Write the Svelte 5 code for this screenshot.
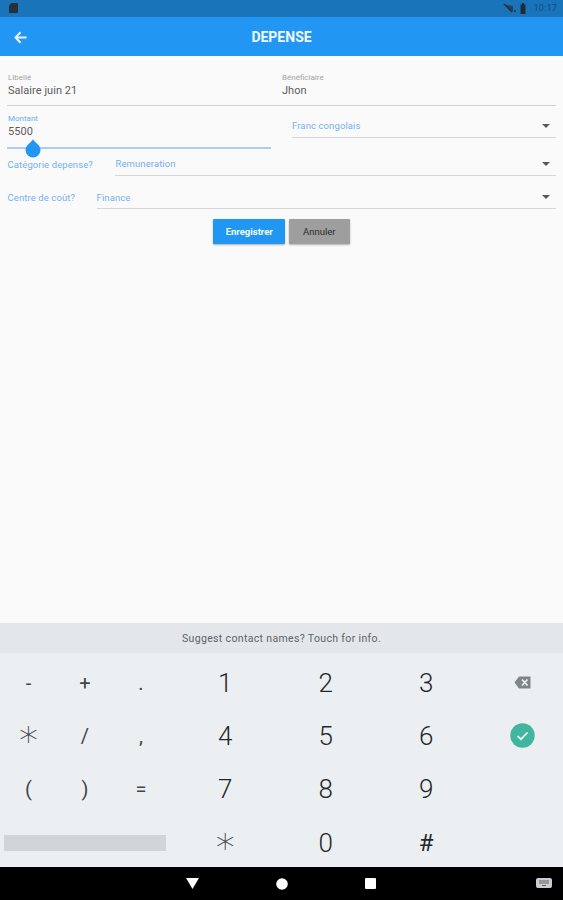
<script>
  const keys = [
    { k: '-', c: 'sym' }, { k: '+', c: 'sym' }, { k: '.', c: 'sym' }, { k: '1', c: 'num first' }, { k: '2', c: 'num' }, { k: '3', c: 'num' }, { k: 'back', c: 'icon' },
    { k: '*', c: 'sym star' }, { k: '/', c: 'sym' }, { k: ',', c: 'sym' }, { k: '4', c: 'num first' }, { k: '5', c: 'num' }, { k: '6', c: 'num' }, { k: 'ok', c: 'icon' },
    { k: '(', c: 'sym' }, { k: ')', c: 'sym' }, { k: '=', c: 'sym' }, { k: '7', c: 'num first' }, { k: '8', c: 'num' }, { k: '9', c: 'num' }, { k: '', c: 'icon' },
  ];
</script>

<div class="screen">
  <div class="status">
    <svg class="sim" width="9" height="10" viewBox="0 0 9 10"><path d="M2.5 0H9V10H0V2.5Z" fill="#26303a"/></svg>
    <div class="status-right">
      <svg width="15" height="10" viewBox="0 0 15 10"><path d="M0 1 10 9V3Z" fill="#26405a"/><path d="M1 1 9 9" stroke="#26303a" stroke-width="1.5"/><rect x="11" y="7" width="2" height="2" fill="#26405a"/></svg>
      <svg class="batt" width="6" height="11" viewBox="0 0 6 11"><path d="M1 1.5H2V0H4V1.5H5.500V11H.5V1.5Z" fill="#1e2a3a"/></svg>
      <span>10:17</span>
    </div>
  </div>
  <header class="appbar">
    <svg class="back" width="13" height="13" viewBox="0 0 13 13"><path d="M12.500 6.500H2M6.500 1.200 1.500 6.500 6.500 11.800" fill="none" stroke="#eaf5ff" stroke-width="2"/></svg>
    <h1>DEPENSE</h1>
  </header>

  <main class="form">
    <div class="row two">
      <div class="field">
        <span class="lab">Libellé</span>
        <span class="val">Salaire juin 21</span>
      </div>
      <div class="field">
        <span class="lab">Bénéficiaire</span>
        <span class="val">Jhon</span>
      </div>
    </div>
    <div class="row-line"></div>

    <div class="row amount">
      <div class="montant">
        <span class="lab blue">Montant</span>
        <span class="val">5500</span>
        <div class="slider"><svg class="thumb" width="16" height="19" viewBox="0 0 16 19"><path d="M8 0C9 3 15.500 6 15.500 11A7.500 7.500 0 0 1 .5 11C.5 6 7 3 8 0Z" fill="#2196f3"/></svg></div>
      </div>
      <div class="select franc">
        <span>Franc congolais</span><i class="caret"></i>
      </div>
    </div>

    <div class="row labeled cat">
      <span class="q">Catégorie depense?</span>
      <div class="select"><span>Remuneration</span><i class="caret"></i></div>
    </div>
    <div class="row labeled centre">
      <span class="q">Centre de coût?</span>
      <div class="select"><span>Finance</span><i class="caret"></i></div>
    </div>

    <div class="actions">
      <button class="save">Enregistrer</button>
      <button class="cancel">Annuler</button>
    </div>
  </main>

  <section class="keyboard">
    <div class="suggest">Suggest contact names? Touch for info.</div>
    <div class="keys">
      {#each keys as key}
        <div class="key {key.c}">
          {#if key.k === 'back'}
            <svg width="17" height="13" viewBox="0 0 17 13"><path d="M5 .5H16.500V12.500H5L.5 6.500Z" fill="#7d8589"/><path d="M8 3.500 13.500 9.500M13.500 3.500 8 9.500" stroke="#eceff1" stroke-width="1.800"/></svg>
          {:else if key.k === 'ok'}
            <svg width="25" height="25" viewBox="0 0 25 25"><circle cx="12.500" cy="12.500" r="12.200" fill="#40b5a0"/><path d="M7.500 13 11 16.200 17.500 9.500" fill="none" stroke="#e8f6f3" stroke-width="1.700"/></svg>
          {:else if key.c.includes('star')}
            <span class="asterisk">*</span>
          {:else}
            {key.k}
          {/if}
        </div>
      {/each}
      <div class="key space-cell"><div class="space"></div></div>
      <div class="key num first"><span class="asterisk">*</span></div>
      <div class="key num">0</div>
      <div class="key num hash">#</div>
      <div class="key"></div>
    </div>
  </section>

  <nav class="navbar">
    <svg width="13" height="11" viewBox="0 0 13 11"><path d="M0 0H13L6.500 11Z" fill="#fff"/></svg>
    <svg width="12" height="12" viewBox="0 0 12 12"><circle cx="6" cy="6" r="5.800" fill="#fff"/></svg>
    <svg width="11" height="11" viewBox="0 0 11 11"><rect width="11" height="11" rx="1" fill="#fff"/></svg>
    <svg class="kb" width="16" height="12" viewBox="0 0 16 12"><rect width="16" height="10" y="1" rx="2" fill="#c9cdcf"/><path d="M3 4H13M3 6H13M6 8.500H10" stroke="#5c6062"/></svg>
  </nav>
</div>

<style>
  :global(body) {
    margin: 0;
    background: #fafafa;
    font-family: Roboto, "Liberation Sans", sans-serif;
  }
  .screen {
    width: 563px;
    height: 900px;
    display: flex;
    flex-direction: column;
    overflow: hidden;
    background: #fafafa;
  }
  .status {
    height: 17px;
    flex: none;
    background: #1a74ba;
    display: flex;
    align-items: center;
    justify-content: space-between;
    padding: 0 6px 1px 9px;
    box-sizing: border-box;
  }
  .status-right {
    display: flex;
    align-items: center;
    gap: 5px;
    font-size: 9px;
    color: #0f4e86;
    letter-spacing: 0.2px;
  }
  .batt {
    margin: 0 3px 0 -3px;
  }
  .appbar {
    height: 39px;
    flex: none;
    background: #2196f3;
    display: flex;
    align-items: center;
    justify-content: center;
    position: relative;
  }
  .back {
    position: absolute;
    left: 14px;
    top: 13.500px;
  }
  h1 {
    margin: 0;
    color: #eef8ff;
    font-size: 14px;
    font-weight: 700;
  }
  .form {
    flex: 1;
    padding: 16.500px 7px 0;
    display: flex;
    flex-direction: column;
    min-height: 0;
  }
  .row.two {
    display: grid;
    grid-template-columns: 274px 1fr;
  }
  .field {
    display: flex;
    flex-direction: column;
  }
  .lab {
    font-size: 8px;
    line-height: 10px;
    height: 10px;
    color: #a2a2a2;
    padding-left: 1px;
  }
  .lab.blue {
    color: #67aef0;
  }
  .val {
    font-size: 11px;
    line-height: 15px;
    color: #5c5c5c;
    letter-spacing: 0.05px;
    padding-left: 1px;
  }
  .row-line {
    height: 1.500px;
    background: #cfcfcf;
    margin-top: 7px;
  }
  .amount {
    display: grid;
    grid-template-columns: 264px 1fr;
    column-gap: 21px;
    margin-top: 8px;
  }
  .montant {
    display: flex;
    flex-direction: column;
  }
  .slider {
    position: relative;
    height: 2px;
    margin-top: 8px;
    background: #a9cdf6;
  }
  .thumb {
    position: absolute;
    left: 18px;
    top: -8px;
  }
  .select {
    display: flex;
    align-items: center;
    justify-content: space-between;
    flex: 1;
    height: 24px;
    box-sizing: border-box;
    border-bottom: 1px solid #d8d8d8;
    color: #74b0ee;
    font-size: 9.500px;
    letter-spacing: 0.1px;
    padding-right: 6px;
  }
  .franc {
    height: 24px;
  }
  .caret {
    width: 0;
    height: 0;
    border-left: 4.500px solid transparent;
    border-right: 4.500px solid transparent;
    border-top: 4.500px solid #5a5a5a;
  }
  .labeled {
    display: flex;
    align-items: center;
    color: #74b0ee;
  }
  .q {
    font-size: 9.500px;
    letter-spacing: 0.1px;
    padding-left: 0.500px;
  }
  .cat {
    margin-top: 3px;
  }
  .cat .select {
    margin-left: 22.500px;
  }
  .centre {
    margin-top: 10px;
  }
  .centre .select {
    margin-left: 21.500px;
    height: 23px;
  }
  .actions {
    display: flex;
    justify-content: center;
    gap: 3.500px;
    margin-top: 10px;
  }
  button {
    height: 25px;
    border: 0;
    border-radius: 1px;
    font-family: inherit;
    font-size: 9.500px;
    padding: 0;
    box-shadow: 0 1px 2px rgba(0, 0, 0, 0.3);
  }
  .save {
    width: 72px;
    background: #2196f3;
    color: #f4faff;
    font-weight: 700;
  }
  .cancel {
    width: 61px;
    background: #9e9e9e;
    color: #2c2c2c;
  }
  .keyboard {
    flex: none;
    height: 244px;
    background: #eceff1;
    display: flex;
    flex-direction: column;
  }
  .suggest {
    height: 30px;
    flex: none;
    background: #e4e7e9;
    color: #5d6469;
    font-size: 10.500px;
    letter-spacing: 0.35px;
    display: flex;
    align-items: center;
    justify-content: center;
  }
  .keys {
    flex: 1;
    display: grid;
    grid-template-columns: 57px 56px 56px 6px 100.500px 100.500px 100.500px 86px;
    grid-auto-rows: 53.300px;
  }
  .key {
    display: flex;
    align-items: center;
    justify-content: center;
    box-sizing: border-box;
    padding-top: 6px;
    color: #3a4348;
  }
  .key.num {
    font-size: 26px;
    font-weight: 300;
    color: #1f282d;
  }
  .key.sym {
    font-size: 20px;
    color: #3f484d;
  }
  .key.first {
    grid-column: 5;
  }
  .key.icon {
    padding-left: 6px;
  }
  .asterisk {
    font-family: "DejaVu Sans", sans-serif;
    font-size: 38px;
    line-height: 38px;
    height: 27px;
    font-weight: 200;
    color: #3a4348;
  }
  .space-cell {
    grid-column: 1 / span 3;
    padding-left: 4px;
    justify-content: flex-start;
  }
  .space {
    width: 162px;
    height: 16px;
    background: #d0d5d7;
  }
  .hash {
    font-size: 24px !important;
    font-weight: 400 !important;
  }
  .navbar {
    height: 33px;
    flex: none;
    background: #000;
    position: relative;
    display: flex;
    align-items: center;
    padding-left: 186px;
    gap: 77px;
  }
  .kb {
    position: absolute;
    right: 11px;
    top: 10px;
  }
</style>
